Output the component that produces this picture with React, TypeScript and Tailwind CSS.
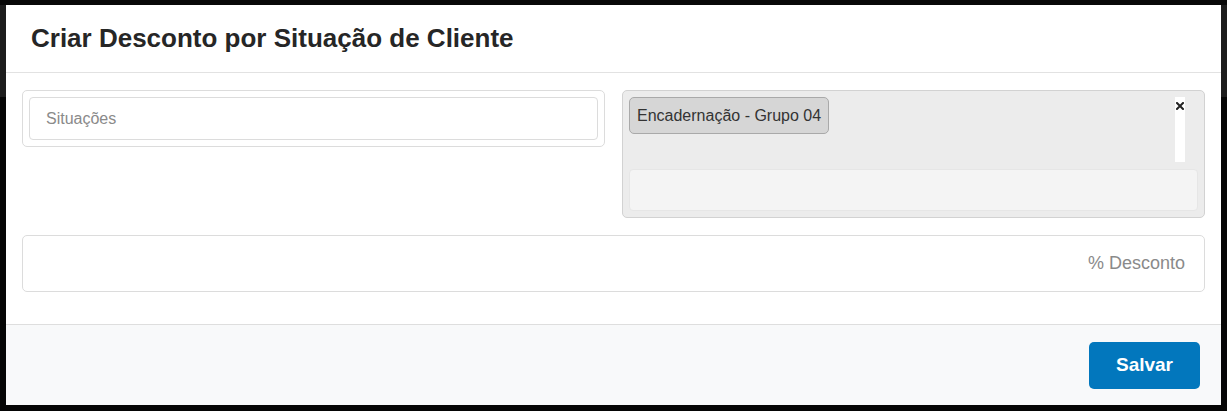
import React from "react";

const fontStack = { fontFamily: '"Liberation Sans", Arial, sans-serif' };

const SituationPicker: React.FC = () => {
  return (
    <div className="grid grid-cols-2 gap-[17px] items-start">
      <div className="rounded-[5px] border border-[#dcdcdc] bg-white p-[6px]">
        <input
          type="text"
          placeholder="Situações"
          className="block h-[43px] w-full rounded-[4px] border border-[#dcdcdc] bg-white px-4 text-[16px] text-[#333] outline-none placeholder:text-[#8a8a8a]"
        />
      </div>

      <div className="rounded-[5px] border border-[#d2d2d2] bg-[#ececec] p-[6px]">
        <div className="flex h-[65px] items-start justify-between">
          <span className="inline-flex h-[37px] items-center rounded-[5px] border border-[#a9a9a9] bg-[#d6d6d6] px-[7px] text-[16px] text-[#333]">
            Encadernação - Grupo 04
          </span>
          <div className="mr-[13px] flex h-[65px] w-[10px] justify-center bg-white pt-[4px]">
            <svg width="8" height="8" viewBox="0 0 8 8" className="mt-[1px]">
              <path d="M1 1 L7 7 M7 1 L1 7" stroke="#222" strokeWidth="2" strokeLinecap="square" />
            </svg>
          </div>
        </div>
        <div className="mt-[7px] h-[42px] rounded-[4px] border border-[#e6e6e6] bg-[#f4f4f4]" />
      </div>
    </div>
  );
};

export default function App() {
  return (
    <div
      className="h-[411px] w-[1227px] overflow-hidden bg-[linear-gradient(#080808_0_5px,#1d1d1d_5px_97px,#050505_97px)] pt-[5px]"
      style={fontStack}
    >
      <div className="mx-[6px] flex h-[400px] w-[1215px] flex-col bg-white">
        <div className="flex h-[68px] items-center border-b border-[#e2e2e2] px-[25px]">
          <h1 className="text-[26px] font-bold text-[#262626]">Criar Desconto por Situação de Cliente</h1>
        </div>

        <div className="flex flex-1 flex-col gap-[17px] px-4 pt-[17px]">
          <SituationPicker />
          <input
            type="text"
            placeholder="% Desconto"
            className="block h-[57px] w-full rounded-[5px] border border-[#dcdcdc] bg-white px-[19px] text-right text-[18px] text-[#333] outline-none placeholder:text-[#8a8a8a]"
          />
        </div>

        <div className="flex h-[81px] items-start justify-end border-t border-[#dedede] bg-[#f8f9fa] pr-[21px] pt-[17px]">
          <button className="h-[47px] w-[111px] rounded-[5px] bg-[#0277bd] text-[19px] font-bold text-white">
            Salvar
          </button>
        </div>
      </div>
    </div>
  );
}
